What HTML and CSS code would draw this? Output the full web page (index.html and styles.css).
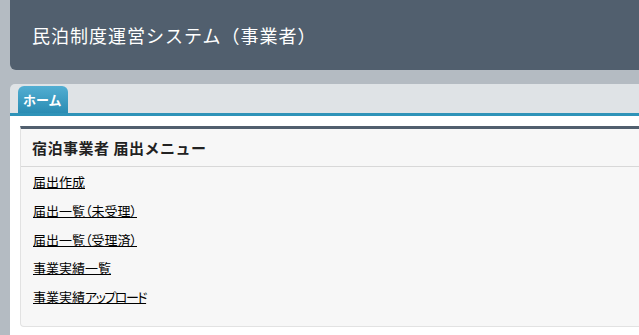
FILE: index.html
```html
<!DOCTYPE html>
<html lang="ja">
<head>
  <meta charset="utf-8">
  <meta name="viewport" content="width=device-width, initial-scale=1.0">
  <title>民泊制度運営システム（事業者）</title>
  <link rel="stylesheet" href="styles.css">
</head>
<body>
  <div class="page">
    <div class="header">
      <h1>民泊制度運営システム（事業者）</h1>
    </div>
    <div class="panel">
      <div class="tabs">
        <a class="tab" href="#">ホーム</a>
      </div>
      <div class="panel-body">
        <div class="card">
          <p class="card-title">宿泊事業者 届出メニュー</p>
          <ul class="menu">
            <li><a href="#">届出作成</a></li>
            <li><a href="#">届出一覧（未受理）</a></li>
            <li><a href="#">届出一覧（受理済）</a></li>
            <li><a href="#">事業実績一覧</a></li>
            <li><a href="#">事業実績<span class="kana">アップロード</span></a></li>
          </ul>
        </div>
      </div>
    </div>
  </div>
</body>
</html>
```

FILE: styles.css
```css
body {
  font-family: "Noto Sans CJK JP", "Noto Sans", sans-serif;
  background-color: #b4bbc2;
  margin: 0;
  overflow: hidden;
}

.page {
  padding-left: 10px;
}

.header {
  height: 70px;
  background-color: #515f6e;
  border-bottom-left-radius: 6px;
}

h1 {
  margin: 0;
  padding-left: 22px;
  line-height: 70px;
  font-size: 18px;
  font-weight: normal;
  letter-spacing: 1px;
  color: #fff;
}

.panel {
  margin-top: 14px;
  background-color: #dfe3e6;
  border-top-left-radius: 5px;
}

.tabs {
  display: flex;
  height: 27px;
  padding: 2px 0 0 8px;
  border-bottom: 3px solid #2e93b8;
}

.tab {
  width: 50px;
  padding-left: 5px;
  box-sizing: border-box;
  line-height: 27px;
  border-radius: 6px 6px 0 0;
  background: linear-gradient(#52aed2, #2a8cb3);
  color: #fff;
  font-size: 13px;
  font-weight: bold;
  text-decoration: none;
}

.panel-body {
  background-color: #fff;
  padding: 10px 0 10px 10px;
}

.card {
  background-color: #f7f7f7;
  border: 1px solid #e2e2e2;
  border-top: 3px solid #515f6e;
  border-right: none;
  border-bottom-left-radius: 4px;
}

.card-title {
  margin: 0;
  padding-left: 11px;
  line-height: 37px;
  font-size: 15px;
  font-weight: bold;
  letter-spacing: 0.5px;
  color: #222;
  border-bottom: 1px solid #d8d8d8;
}

.menu {
  list-style: none;
  margin: 0;
  padding: 1px 0 14px 12px;
}

.menu li {
  line-height: 28.75px;
  font-size: 13px;
}

.menu a {
  color: #000;
  font-feature-settings: "palt";
}

/* katakana is set narrow in the original */
.kana {
  letter-spacing: -1.5px;
}
```
